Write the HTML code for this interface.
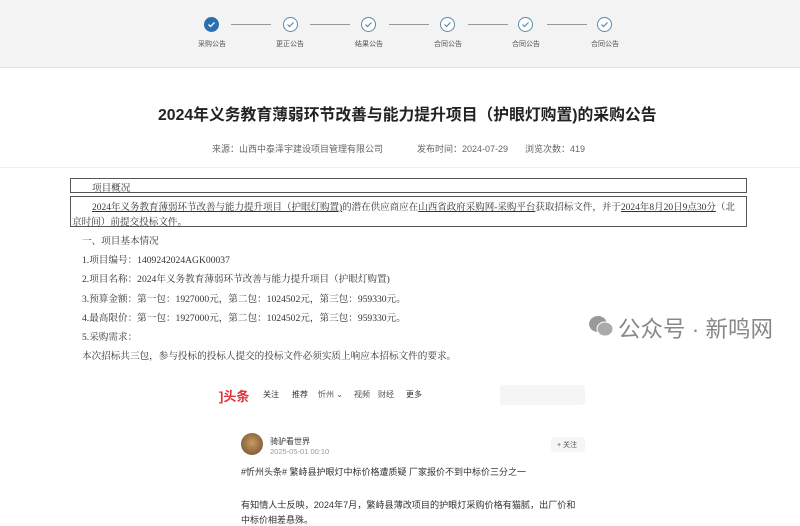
<!DOCTYPE html>
<html><head><meta charset="utf-8"><style>
*{margin:0;padding:0;box-sizing:border-box}
body{width:800px;height:525px;overflow:hidden;background:#fff;font-family:"Liberation Sans","Noto Sans CJK SC",sans-serif;position:relative;color:#333}
.a{position:absolute;white-space:nowrap}
.band{position:absolute;left:0;top:0;width:800px;height:68px;background:#f3f3f3;border-bottom:1px solid #e6e6e6}
.c{position:absolute;width:15px;height:15px;border-radius:50%;border:1.5px solid #5a8aa8;top:17px;background:#fff}
.c svg{position:absolute;left:2px;top:2px}
.c.on{background:#2a6fb0;border-color:#2a6fb0}
.ln{position:absolute;top:24px;height:1px;width:40px;background:#999}
.lb{position:absolute;top:39px;font-size:7px;color:#555;width:60px;text-align:center}
.s{font-family:"Liberation Serif","Noto Serif CJK SC",serif;font-size:9.6px;color:#333}
.box{position:absolute;border:1px solid #555}
</style></head><body>
<div class="band"></div>
<div class="c on" style="left:204px"><svg width="9" height="9" viewBox="0 0 9 9"><path d="M1.5 4.5l2 2 4-4" stroke="#fff" stroke-width="1.3" fill="none"/></svg></div>
<div class="c" style="left:283px"><svg width="9" height="9" viewBox="0 0 9 9"><path d="M1.5 4.5l2 2 4-4" stroke="#5a8aa8" stroke-width="1.2" fill="none"/></svg></div>
<div class="c" style="left:361px"><svg width="9" height="9" viewBox="0 0 9 9"><path d="M1.5 4.5l2 2 4-4" stroke="#5a8aa8" stroke-width="1.2" fill="none"/></svg></div>
<div class="c" style="left:440px"><svg width="9" height="9" viewBox="0 0 9 9"><path d="M1.5 4.5l2 2 4-4" stroke="#5a8aa8" stroke-width="1.2" fill="none"/></svg></div>
<div class="c" style="left:518px"><svg width="9" height="9" viewBox="0 0 9 9"><path d="M1.5 4.5l2 2 4-4" stroke="#5a8aa8" stroke-width="1.2" fill="none"/></svg></div>
<div class="c" style="left:597px"><svg width="9" height="9" viewBox="0 0 9 9"><path d="M1.5 4.5l2 2 4-4" stroke="#5a8aa8" stroke-width="1.2" fill="none"/></svg></div>
<div class="ln" style="left:231px"></div><div class="ln" style="left:310px"></div><div class="ln" style="left:389px"></div><div class="ln" style="left:468px"></div><div class="ln" style="left:547px"></div>
<div class="lb" style="left:182px">采购公告</div><div class="lb" style="left:260px">更正公告</div><div class="lb" style="left:339px">结果公告</div><div class="lb" style="left:418px">合同公告</div><div class="lb" style="left:496px">合同公告</div><div class="lb" style="left:575px">合同公告</div>
<div class="a" style="left:158px;top:102px;font-size:15.8px;font-weight:bold;color:#222">2024年义务教育薄弱环节改善与能力提升项目（护眼灯购置)的采购公告</div>
<div class="a" style="left:212px;top:142px;font-size:9px;color:#666">来源：山西中泰泽宇建设项目管理有限公司</div>
<div class="a" style="left:417px;top:142px;font-size:9px;color:#666">发布时间：2024-07-29</div>
<div class="a" style="left:525px;top:142px;font-size:9px;color:#666">浏览次数：419</div>
<div style="position:absolute;left:0;top:167px;width:800px;height:1px;background:#eee"></div>
<div class="box" style="left:70px;top:178px;width:677px;height:15px"></div>
<div class="a s" style="left:92px;top:180px">项目概况</div>
<div class="box" style="left:70px;top:196px;width:677px;height:31px"></div>
<div class="a s" style="left:92px;top:199px;font-size:9.5px"><u>2024年义务教育薄弱环节改善与能力提升项目（护眼灯购置)</u>的潜在供应商应在<u>山西省政府采购网-采购平台</u>获取招标文件，并于<u>2024年8月20日9点30分</u>（北</div>
<div class="a s" style="left:72px;top:214px">京时间）前提交投标文件。</div>
<div class="a s" style="left:82px;top:233px">一、项目基本情况</div>
<div class="a s" style="left:82px;top:252px">1.项目编号：1409242024AGK00037</div>
<div class="a s" style="left:82px;top:271px">2.项目名称：2024年义务教育薄弱环节改善与能力提升项目（护眼灯购置)</div>
<div class="a s" style="left:82px;top:291px">3.预算金额：第一包：1927000元，第二包：1024502元，第三包：959330元。</div>
<div class="a s" style="left:82px;top:310px">4.最高限价：第一包：1927000元，第二包：1024502元，第三包：959330元。</div>
<div class="a s" style="left:82px;top:329px">5.采购需求：</div>
<div class="a s" style="left:82px;top:348px">本次招标共三包，参与投标的投标人提交的投标文件必须实质上响应本招标文件的要求。</div>
<svg class="a" style="left:588px;top:314px" width="26" height="24" viewBox="0 0 26 24"><ellipse cx="10" cy="10" rx="9" ry="8" fill="#999"/><ellipse cx="17" cy="15" rx="8" ry="7" fill="#aaa" stroke="#fff" stroke-width="1"/></svg>
<div class="a" style="left:618px;top:312px;font-size:22.5px;color:#888">公众号 · 新鸣网</div>
<div style="position:absolute;left:0;top:362px;width:800px;height:163px;background:#fff"></div>
<div class="a" style="left:219px;top:386px;font-size:13px;font-weight:bold;color:#e0303a">]头条</div>
<div class="a" style="left:263px;top:389px;font-size:8px;color:#333">关注</div>
<div class="a" style="left:292px;top:389px;font-size:8px;color:#333">推荐</div>
<div class="a" style="left:318px;top:389px;font-size:8px;color:#555">忻州 ⌄</div>
<div class="a" style="left:354px;top:389px;font-size:8px;color:#555">视频</div>
<div class="a" style="left:378px;top:389px;font-size:8px;color:#555">财经</div>
<div class="a" style="left:406px;top:389px;font-size:8px;color:#333">更多</div>
<div style="position:absolute;left:500px;top:385px;width:85px;height:20px;background:#f5f5f5;border-radius:3px"></div>
<div style="position:absolute;left:241px;top:433px;width:22px;height:22px;border-radius:50%;background:radial-gradient(circle at 50% 45%,#c89a60,#6a4a2a)"></div>
<div class="a" style="left:270px;top:436px;font-size:8px;color:#333">骑驴看世界</div>
<div class="a" style="left:270px;top:447px;font-size:7.5px;color:#999">2025-05-01 00:10</div>
<div style="position:absolute;left:551px;top:437px;width:34px;height:15px;background:#f6f6f6;border-radius:3px"></div>
<div class="a" style="left:557px;top:440px;font-size:7px;color:#555">+ 关注</div>
<div class="a" style="left:241px;top:465px;font-size:9px;color:#333">#忻州头条# 繁峙县护眼灯中标价格遭质疑 厂家报价不到中标价三分之一</div>
<div class="a" style="left:241px;top:497px;font-size:9.1px;color:#333">有知情人士反映，2024年7月，繁峙县薄改项目的护眼灯采购价格有猫腻，出厂价和</div>
<div class="a" style="left:241px;top:513px;font-size:9px;color:#333">中标价相差悬殊。</div>
</body></html>
